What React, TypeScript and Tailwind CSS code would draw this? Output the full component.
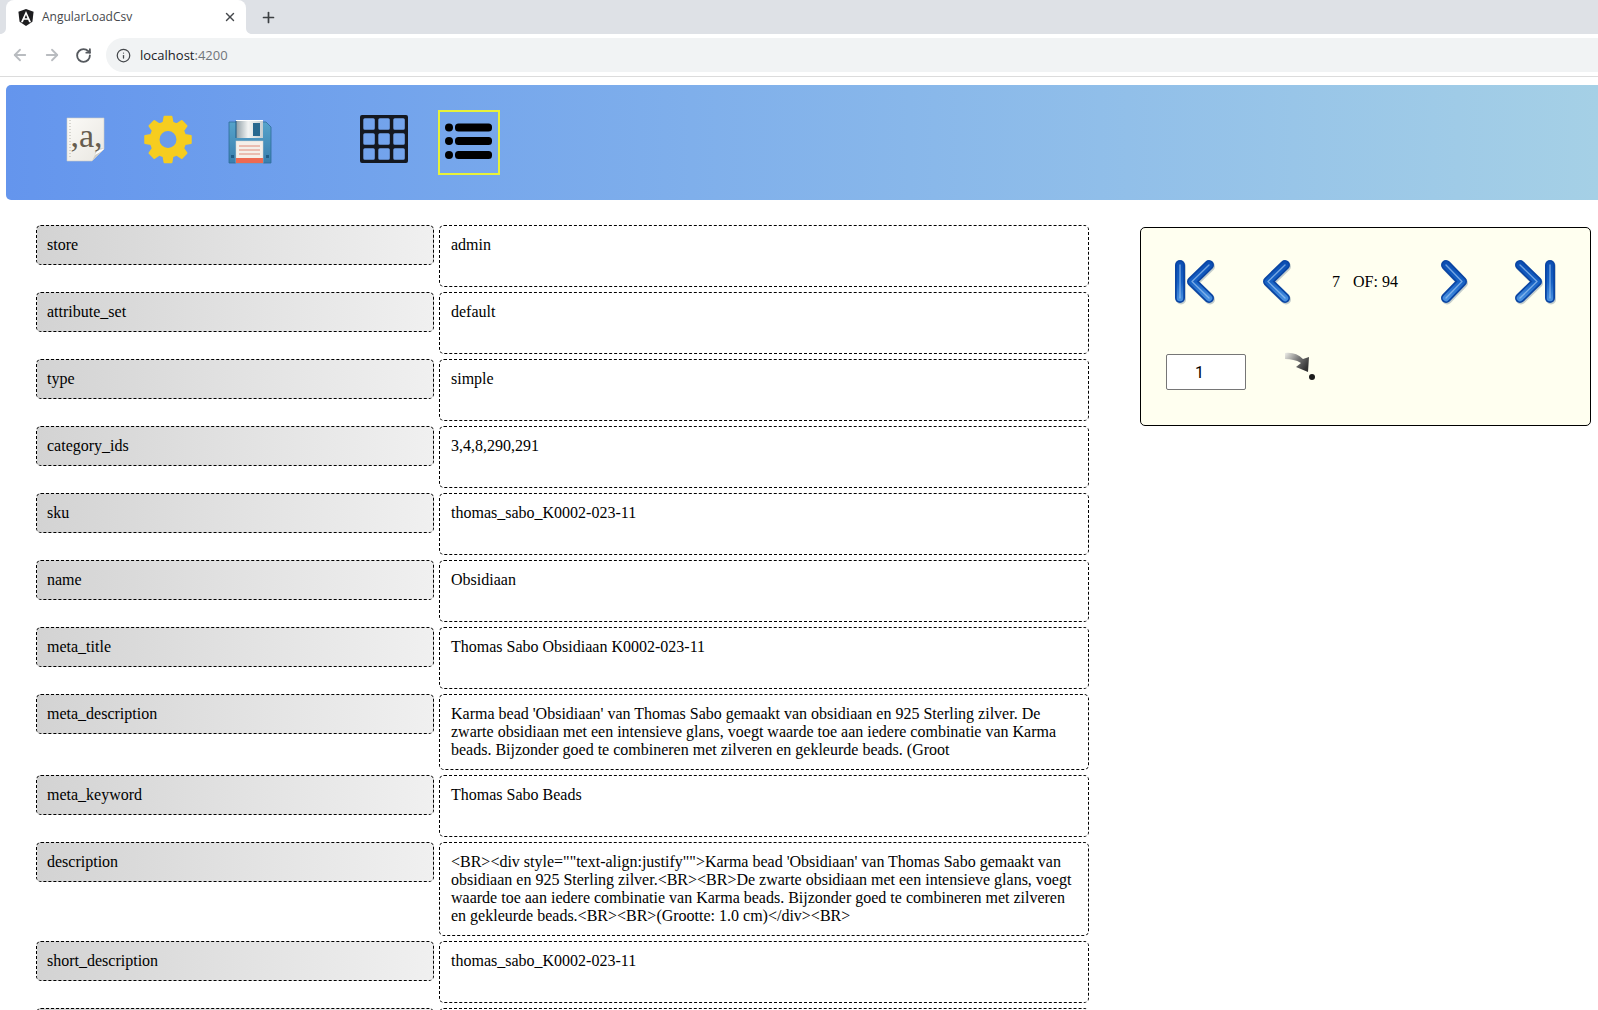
import { ArrowLeft, ArrowRight, RotateCw, Info, X, Plus } from 'lucide-react'

const rows: { label: string; value: string }[] = [
  { label: 'store', value: 'admin' },
  { label: 'attribute_set', value: 'default' },
  { label: 'type', value: 'simple' },
  { label: 'category_ids', value: '3,4,8,290,291' },
  { label: 'sku', value: 'thomas_sabo_K0002-023-11' },
  { label: 'name', value: 'Obsidiaan' },
  { label: 'meta_title', value: 'Thomas Sabo Obsidiaan K0002-023-11' },
  {
    label: 'meta_description',
    value:
      "Karma bead 'Obsidiaan' van Thomas Sabo gemaakt van obsidiaan en 925 Sterling zilver. De zwarte obsidiaan met een intensieve glans, voegt waarde toe aan iedere combinatie van Karma beads. Bijzonder goed te combineren met zilveren en gekleurde beads. (Groot",
  },
  { label: 'meta_keyword', value: 'Thomas Sabo Beads' },
  {
    label: 'description',
    value:
      '<BR><div style=""text-align:justify"">Karma bead \'Obsidiaan\' van Thomas Sabo gemaakt van obsidiaan en 925 Sterling zilver.<BR><BR>De zwarte obsidiaan met een intensieve glans, voegt waarde toe aan iedere combinatie van Karma beads. Bijzonder goed te combineren met zilveren en gekleurde beads.<BR><BR>(Grootte: 1.0 cm)</div><BR>',
  },
  { label: 'short_description', value: 'thomas_sabo_K0002-023-11' },
  { label: '', value: '' },
]

function gearPath(cx: number, cy: number, outer: number, inner: number, hole: number, teeth: number) {
  const pts: string[] = []
  const step = (Math.PI * 2) / teeth
  for (let i = 0; i < teeth; i++) {
    const a = i * step - Math.PI / 2
    const corners: [number, number][] = [
      [a - step * 0.33, inner],
      [a - step * 0.19, outer],
      [a + step * 0.19, outer],
      [a + step * 0.33, inner],
    ]
    corners.forEach(([t, r]) => {
      pts.push(`${(cx + Math.cos(t) * r).toFixed(2)} ${(cy + Math.sin(t) * r).toFixed(2)}`)
    })
  }
  const ring = `M${cx - hole} ${cy}a${hole} ${hole} 0 1 0 ${hole * 2} 0a${hole} ${hole} 0 1 0 ${-hole * 2} 0Z`
  return `M${pts.join('L')}Z${ring}`
}

// rounded cells cut out of the grid icon
function gridPath() {
  let d = 'M2 0H46A2 2 0 0 1 48 2V46A2 2 0 0 1 46 48H2A2 2 0 0 1 0 46V2A2 2 0 0 1 2 0Z'
  for (let r = 0; r < 3; r++) {
    for (let c = 0; c < 3; c++) {
      const x = 3.3 + c * 15
      const y = 3.3 + r * 15
      d += `M${x + 1.5} ${y}H${x + 10}A1.5 1.5 0 0 1 ${x + 11.5} ${y + 1.5}V${y + 10}A1.5 1.5 0 0 1 ${x + 10} ${y + 11.5}H${x + 1.5}A1.5 1.5 0 0 1 ${x} ${y + 10}V${y + 1.5}A1.5 1.5 0 0 1 ${x + 1.5} ${y}Z`
    }
  }
  return d
}

function DocIcon() {
  return (
    <svg width="40" height="46" viewBox="0 0 40 46">
      <defs>
        <linearGradient id="paper" x1="0" y1="0" x2="1" y2="1">
          <stop offset="0" stopColor="#fbfaf7" />
          <stop offset="1" stopColor="#e9e7e1" />
        </linearGradient>
      </defs>
      <path d="M1 1H38V32L26 44H1Z" fill="url(#paper)" stroke="#cfcdc6" strokeWidth="0.6" />
      <path d="M38 32C33 30 28 33 29 38L26 44Z" fill="#cfcdc6" />
      <path d="M38 32C34 32 30 34 29 38C32 36 35 35 38 32Z" fill="#fff" />
      <line x1="4" y1="3" x2="4" y2="42" stroke="#b5b3ac" strokeWidth="1" strokeDasharray="1 2" />
      <text x="20.5" y="30" textAnchor="middle" fontFamily="'Liberation Serif', serif" fontSize="34" fill="#665d4f">
        ,a,
      </text>
    </svg>
  )
}

function GearIcon() {
  return (
    <svg width="48" height="49" viewBox="0 0 48 49">
      <path
        d={gearPath(24, 24.5, 23, 17.5, 9.5, 8)}
        fill="#f6cd1f"
        fillRule="evenodd"
        stroke="#f6cd1f"
        strokeWidth="2"
        strokeLinejoin="round"
      />
    </svg>
  )
}

function FloppyIcon() {
  return (
    <svg width="44" height="44" viewBox="0 0 44 44">
      <defs>
        <linearGradient id="disk" x1="0" y1="0" x2="0" y2="1">
          <stop offset="0" stopColor="#56a3cb" />
          <stop offset="1" stopColor="#3a7fae" />
        </linearGradient>
        <linearGradient id="shutter" x1="0" y1="0" x2="1" y2="0">
          <stop offset="0" stopColor="#8f9ea6" />
          <stop offset="0.45" stopColor="#f2f4f4" />
          <stop offset="1" stopColor="#c4cdd1" />
        </linearGradient>
      </defs>
      <path d="M1 2H38L43 7V43H1Z" fill="url(#disk)" stroke="#2f6d99" strokeWidth="0.8" />
      <rect x="8" y="0" width="27" height="18" fill="url(#shutter)" />
      <rect x="8" y="0" width="27" height="1" fill="#fff" />
      <line x1="8" y1="1" x2="8" y2="18" stroke="#1f5a85" strokeWidth="1" />
      <rect x="25" y="3" width="7" height="13" fill="#27688f" />
      <rect x="8" y="21" width="27" height="22" fill="#f5efe9" stroke="#cfd3d3" strokeWidth="0.5" />
      <rect x="8" y="38" width="27" height="5" fill="#ee6a52" />
      <path d="M11 26H32M11 30H32M11 34H32" stroke="#e08a78" strokeWidth="1" />
      <rect x="3" y="35" width="3" height="3" fill="#1f5a85" />
      <rect x="38" y="35" width="3" height="3" fill="#1f5a85" />
    </svg>
  )
}

function GridIcon() {
  return (
    <svg width="48" height="48" viewBox="0 0 48 48">
      <path d={gridPath()} fill="#141820" fillRule="evenodd" />
    </svg>
  )
}

function ListIcon() {
  return (
    <svg width="48" height="36" viewBox="0 0 48 36" fill="#000">
      <circle cx="4" cy="4.5" r="4" />
      <circle cx="4" cy="18" r="4" />
      <circle cx="4" cy="32" r="4" />
      <rect x="10" y="0.5" width="37" height="8" rx="3.5" />
      <rect x="10" y="14" width="37" height="8" rx="3.5" />
      <rect x="10" y="28" width="37" height="8" rx="3.5" />
    </svg>
  )
}

// glossy blue arrow strokes: shadow, dark rim, body, highlight
function GlossStroke({ d }: { d: string }) {
  return (
    <>
      <path d={d} stroke="#6f8496" strokeOpacity="0.4" strokeWidth="10" transform="translate(1 1.5)" />
      <path d={d} stroke="#0a45a3" strokeWidth="10" />
      <path d={d} stroke="url(#gloss)" strokeWidth="6.5" />
      <path d={d} stroke="#9cc6f2" strokeOpacity="0.7" strokeWidth="1.4" />
    </>
  )
}

function PagerIcon({ kind }: { kind: 'first' | 'prev' | 'next' | 'last' }) {
  const wide = kind === 'first' || kind === 'last'
  return (
    <svg
      className={wide ? 'h-[46px] w-[42px]' : 'h-[46px] w-[30px]'}
      viewBox={wide ? '0 0 42 46' : '0 0 30 46'}
      fill="none"
      strokeLinecap="round"
      strokeLinejoin="round"
    >
      <defs>
        <linearGradient id="gloss" gradientUnits="userSpaceOnUse" x1="0" y1="4" x2="0" y2="42">
          <stop offset="0" stopColor="#0b4fb4" />
          <stop offset="0.5" stopColor="#1661c4" />
          <stop offset="1" stopColor="#4b93e2" />
        </linearGradient>
      </defs>
      {kind === 'first' && (
        <>
          <GlossStroke d="M6 6V39" />
          <GlossStroke d="M35 6L18 22.5L35 39" />
        </>
      )}
      {kind === 'prev' && <GlossStroke d="M22 6L5 22.5L22 39" />}
      {kind === 'next' && <GlossStroke d="M6 6L22 22.5L6 39" />}
      {kind === 'last' && (
        <>
          <GlossStroke d="M5 6L22 22.5L5 39" />
          <GlossStroke d="M35 6V39" />
        </>
      )}
    </svg>
  )
}

function GoIcon() {
  return (
    <svg width="34" height="32" viewBox="0 0 34 32">
      <defs>
        <linearGradient id="go" x1="0" y1="0" x2="1" y2="0.6">
          <stop offset="0" stopColor="#f0f0ea" />
          <stop offset="0.55" stopColor="#777" />
          <stop offset="1" stopColor="#333" />
        </linearGradient>
      </defs>
      <path d="M2 1C9 0 15 2 20 7L26 5L25 20L13 15L18 11C13 8 8 7 2 7Z" fill="url(#go)" />
      <circle cx="29" cy="25" r="3" fill="#1b1b1b" />
    </svg>
  )
}

function AngularLogo() {
  return (
    <svg width="16" height="17" viewBox="0 0 16 17">
      <path d="M8 0L15.6 2.7L14.4 12.7L8 17L1.6 12.7L.4 2.7Z" fill="#1d1d1f" />
      <path d="M8 2L2.9 13.2H4.9L5.9 10.7H10.1L11.1 13.2H13.1ZM8 5.8L9.4 9.2H6.6Z" fill="#fff" />
    </svg>
  )
}

function BrowserBar() {
  return (
    <div className="font-['Open_Sans',sans-serif]">
      <div className="flex h-[34px] bg-[#dee1e6] pl-[6px]">
        <div className="relative flex w-[240px] items-center rounded-t-[8px] bg-white pl-[12px] pr-[9px]">
          <svg className="absolute bottom-0 left-[-6px]" width="6" height="6" viewBox="0 0 6 6">
            <path d="M6 0V6H0C3.5 6 6 3.5 6 0Z" fill="#fff" />
          </svg>
          <svg className="absolute bottom-0 right-[-6px]" width="6" height="6" viewBox="0 0 6 6">
            <path d="M0 0V6H6C2.5 6 0 3.5 0 0Z" fill="#fff" />
          </svg>
          <AngularLogo />
          <span className="ml-[8px] flex-1 text-[12px] text-[#45484c]">AngularLoadCsv</span>
          <X size={14} strokeWidth={2.4} className="text-[#45484c]" />
        </div>
        <div className="ml-[14px] flex items-center">
          <Plus size={17} strokeWidth={2.4} className="text-[#3c4043]" />
        </div>
      </div>
      <div className="flex h-[42px] items-center bg-white pl-[11px]">
        <ArrowLeft size={18} strokeWidth={2.4} className="text-[#b9bcc0]" />
        <ArrowRight size={18} strokeWidth={2.4} className="ml-[14px] text-[#b9bcc0]" />
        <RotateCw size={17} strokeWidth={2.6} className="ml-[14px] text-[#55595e]" />
        <div className="ml-[14px] flex h-[34px] flex-1 items-center rounded-l-full bg-[#f1f3f4] pl-[10px]">
          <Info size={15} className="text-[#45484c]" />
          <span className="ml-[9px] pt-px text-[13px] text-[#202124]">
            localhost<span className="text-[#70757a]">:4200</span>
          </span>
        </div>
      </div>
      <div className="h-px bg-[#dcdcdc]" />
    </div>
  )
}

function Toolbar() {
  return (
    <div className="ml-[6px] mt-[8px] flex h-[115px] items-center rounded-l-[5px] bg-gradient-to-r from-[#6495ed] to-[#a5d0e6] pl-[60px]">
      <div className="mb-[6px]">
        <DocIcon />
      </div>
      <div className="mb-[6px] ml-[38px]">
        <GearIcon />
      </div>
      <div className="mb-[2px] ml-[36px]">
        <FloppyIcon />
      </div>
      <div className="mb-[8px] ml-[88px]">
        <GridIcon />
      </div>
      <div className="ml-[30px] flex h-[65px] w-[62px] items-center justify-center border-2 border-[#e8f23a] pb-[4px]">
        <ListIcon />
      </div>
    </div>
  )
}

function Pager() {
  return (
    <div className="ml-[51px] mt-[2px] h-[199px] w-[451px] shrink-0 rounded-[5px] border border-black bg-[#fffff0] font-['Liberation_Serif',serif] text-[16px] text-black">
      <div className="mt-[31px] flex items-center pl-[33px]">
        <PagerIcon kind="first" />
        <div className="ml-[47px]">
          <PagerIcon kind="prev" />
        </div>
        <span className="ml-[39px] w-[21px]">7</span>
        <span>OF: 94</span>
        <div className="ml-[42px]">
          <PagerIcon kind="next" />
        </div>
        <div className="ml-[45px]">
          <PagerIcon kind="last" />
        </div>
      </div>
      <div className="mt-[49px] flex items-start pl-[25px]">
        <input
          readOnly
          value="1"
          className="h-[36px] w-[80px] rounded-[2px] border border-[#767676] bg-white pl-[28px] font-['Roboto',sans-serif] text-[16px] text-black outline-none"
        />
        <div className="-mt-[2px] ml-[37px]">
          <GoIcon />
        </div>
      </div>
    </div>
  )
}

export default function App() {
  return (
    <div className="h-[1010px] overflow-hidden bg-white">
      <BrowserBar />
      <Toolbar />
      <main className="flex pl-[36px] pt-[25px] font-['Liberation_Serif',serif] text-[16px] leading-[18px] text-black">
        <div className="w-[1053px] shrink-0">
          {rows.map((row, i) => (
            <div key={i} className="mb-[5px] flex items-start gap-[5px]">
              <div className="h-[40px] w-[398px] shrink-0 rounded-[5px] border border-dashed border-black bg-gradient-to-r from-[#d3d3d3] to-[#f0f0f0] p-[10px]">
                {row.label}
              </div>
              <div className="min-h-[62px] w-[650px] shrink-0 rounded-[5px] border border-dashed border-black py-[10px] pl-[11px] pr-[10px]">
                {row.value}
              </div>
            </div>
          ))}
        </div>
        <Pager />
      </main>
    </div>
  )
}
